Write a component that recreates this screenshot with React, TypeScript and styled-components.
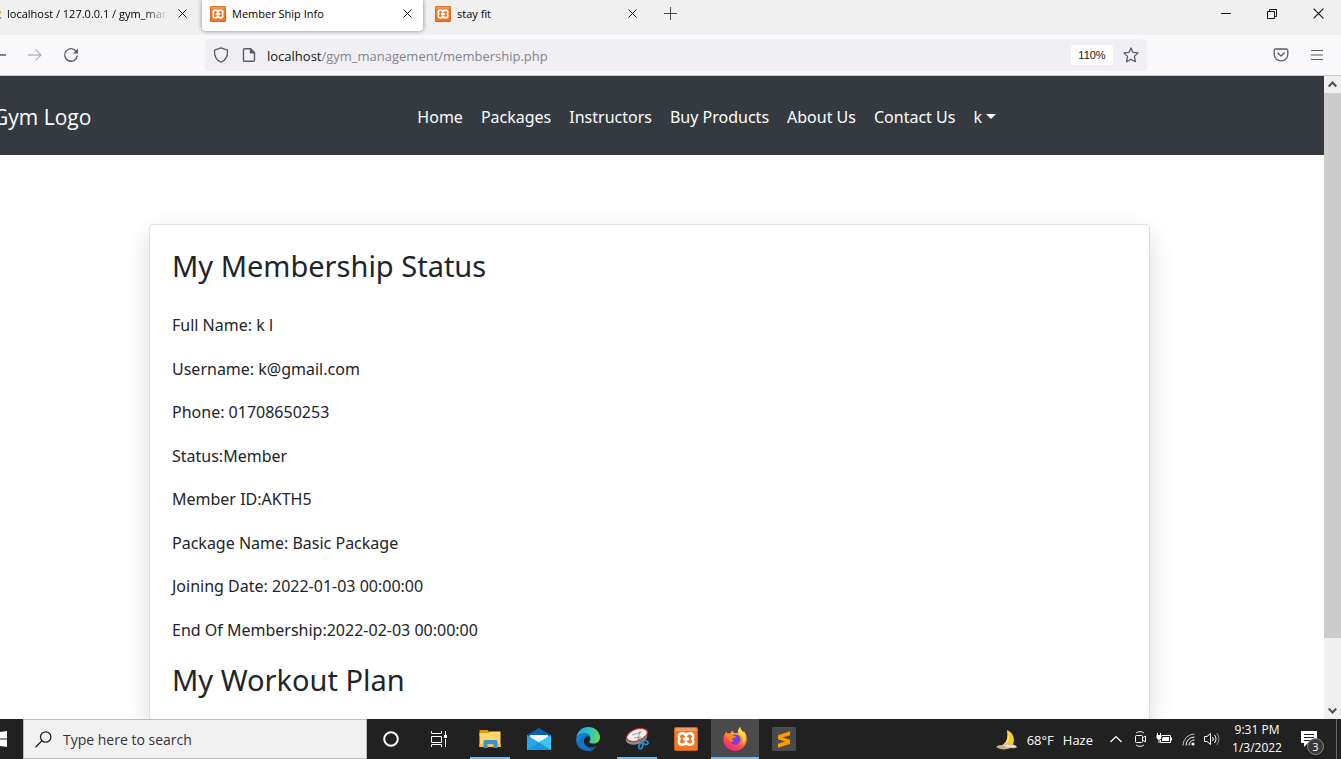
import React from "react";
import styled, { createGlobalStyle, css } from "styled-components";

const GlobalStyle = createGlobalStyle`
  *, *::before, *::after { box-sizing: border-box; }
  body { margin: 0; background: #fff; overflow: hidden; }
  body, button, input { font-family: "Open Sans", "Noto Sans", sans-serif; }
  button, input { border: 0; padding: 0; margin: 0; background: none; color: inherit; }
  button { display: flex; align-items: center; justify-content: center; flex: none; }
  svg { display: block; flex: none; }
`;

/* The desktop starts a little left of the visible edge. */
const Desktop = styled.div`
  display: flex;
  flex-direction: column;
  height: 100vh;
  margin-left: -25px;
`;

/* ---------- browser tabs ---------- */
const TabStrip = styled.header`
  display: flex;
  flex: none;
  height: 35px;
  padding-left: 2px;
  background: #f0f0f0;
  color: #15141a;
`;
const TabList = styled.div`
  display: flex;
  gap: 4px;
`;
const Tab = styled.div<{ $active?: boolean }>`
  display: flex;
  align-items: center;
  width: 221px;
  height: 31px;
  padding: 0 8px 4px;
  gap: 6px;
  border-radius: 0 0 4px 4px;
  ${(p) => p.$active && css`
    background: #fff;
    box-shadow: 0 0 4px rgba(0, 0, 0, 0.45);
  `}
`;
const TabTitle = styled.button<{ $fade?: boolean }>`
  flex: 1;
  min-width: 0;
  justify-content: flex-start;
  white-space: nowrap;
  font-size: 11px;
  line-height: 20px;
  color: #000;
  ${(p) => p.$fade && css`
    mask-image: linear-gradient(to left, transparent, #000 24px);
  `}
`;
const TabClose = styled.button`
  width: 16px;
  height: 20px;
`;
const NewTab = styled.button`
  width: 36px;
  height: 27px;
  margin-left: 4px;
`;
const WindowControls = styled.div`
  display: flex;
  margin-left: auto;
`;
const WindowButton = styled.button`
  width: 46px;
  height: 27px;
`;

/* ---------- browser toolbar ---------- */
const Toolbar = styled.div`
  display: flex;
  flex: none;
  align-items: center;
  height: 41px;
  padding: 0 6px;
  background: #f9f9fb;
  border-bottom: 1px solid #cccccc;
  color: #5b5b66;
`;
const ToolButton = styled.button<{ $dim?: boolean }>`
  width: 36px;
  height: 32px;
  opacity: ${(p) => (p.$dim ? 0.4 : 1)};
`;
const AddressBar = styled.div`
  display: flex;
  flex: 1;
  align-items: center;
  height: 32px;
  margin: 0 116px;
  padding: 0 8px;
  gap: 10px;
  border-radius: 4px;
  background: #f0f0f4;
`;
const AddressIcons = styled.div`
  display: flex;
  gap: 12px;
`;
const Address = styled.label`
  display: flex;
  flex: 1;
  align-items: center;
  padding-top: 2px;
  font-size: 13px;
  line-height: 20px;
  color: #15141a;
`;
const AddressInput = styled.input`
  flex: 1;
  min-width: 0;
  font-size: 13px;
  line-height: 20px;
  color: #84848c;
`;
const ZoomLevel = styled.button`
  width: 42px;
  height: 20px;
  border-radius: 3px;
  background: #fff;
  color: #15141a;
  font-family: "Liberation Sans", sans-serif;
  font-size: 11px;
`;

/* ---------- page ---------- */
const Viewport = styled.div`
  display: flex;
  flex: 1;
  min-height: 0;
  background: #fff;
`;
const Page = styled.div`
  flex: 1;
  min-width: 0;
  overflow: hidden;
  font-family: "Noto Sans", "Open Sans", sans-serif;
`;
const Navbar = styled.nav`
  display: flex;
  align-items: center;
  height: 79px;
  padding: 2px 18px 0;
  background: #343a40;
  color: #fff;
`;
const Brand = styled.a`
  margin-right: 16px;
  font-family: "Open Sans", sans-serif;
  font-size: 21px;
  line-height: 32px;
  color: #fff;
  text-decoration: none;
  white-space: nowrap;
`;
const NavList = styled.ul`
  display: flex;
  flex: 1;
  justify-content: center;
  margin: 0;
  padding: 0;
  list-style: none;
`;
const NavLink = styled.a`
  display: flex;
  align-items: center;
  gap: 4px;
  padding: 0 9px;
  font-size: 16px;
  line-height: 26px;
  color: #fff;
  text-decoration: none;
  white-space: nowrap;
`;
const Caret = styled.span`
  border: 5px solid transparent;
  border-top-color: currentColor;
  border-bottom: 0;
`;
const Card = styled.main`
  max-width: 1001px;
  margin: 69px auto;
  padding: 22px;
  border: 1px solid #dfdfdf;
  border-radius: 4px;
  background: #fff;
  box-shadow: 0 9px 26px rgba(0, 0, 0, 0.14);
  color: #212529;
`;
const Heading = styled.h3`
  margin: 0;
  font-size: 29px;
  line-height: 37px;
  font-weight: 400;
`;
const Details = styled.div`
  display: flex;
  flex-direction: column;
  justify-content: space-between;
  min-height: 331px;
  margin: 28px 0 18px;
`;
const Detail = styled.p`
  margin: 0;
  font-size: 16px;
  line-height: 26px;
`;

const ScrollTrack = styled.div`
  display: flex;
  flex: none;
  flex-direction: column;
  width: 17px;
  background: #f0f0f0;
  color: #505050;
`;
const ScrollArrow = styled.button`
  height: 17px;
`;
const ScrollThumb = styled.div`
  flex: 545;
  background: #cdcdcd;
`;
const ScrollRest = styled.div`
  flex: 64;
`;

/* ---------- taskbar ---------- */
const Taskbar = styled.footer`
  display: flex;
  flex: none;
  height: 40px;
  background: #212121;
  color: #fff;
`;
const TaskButton = styled.button<{ $state?: "open" | "active" }>`
  position: relative;
  width: 48px;
  height: 40px;
  ${(p) => p.$state === "active" && css`background: #4a4a4a;`}
  ${(p) => p.$state && css`
    &::after {
      content: "";
      position: absolute;
      bottom: 0;
      left: ${p.$state === "active" ? 0 : 4}px;
      right: ${p.$state === "active" ? 0 : 4}px;
      height: 2px;
      background: #76b9ed;
    }
  `}
`;
const SearchBox = styled.label`
  display: flex;
  align-items: center;
  width: 344px;
  padding: 0 11px;
  gap: 11px;
  border: 1px solid #bcbcbc;
  background: #f1f1f1;
  color: #202020;
`;
const SearchInput = styled.input`
  flex: 1;
  min-width: 0;
  padding-top: 2px;
  font-size: 14px;
  line-height: 20px;
  &::placeholder { color: #333; opacity: 1; }
`;
const AppList = styled.div`
  display: flex;
  gap: 1px;
  margin-left: 3px;
`;
const Tray = styled.div`
  display: flex;
  align-items: center;
  margin-left: auto;
`;
const Weather = styled.button`
  height: 40px;
  gap: 9px;
  margin-right: 11px;
  padding-top: 2px;
  font-size: 13px;
  line-height: 20px;
`;
const TrayButton = styled.button`
  width: 24px;
  height: 40px;
`;
const Clock = styled.button`
  flex-direction: column;
  width: 66px;
  height: 40px;
  font-size: 12px;
  line-height: 18px;
`;
const Notifications = styled.button`
  position: relative;
  width: 47px;
  height: 40px;
  padding-right: 9px;
  border-right: 1px solid #6b6b6b;
  margin-right: 4px;
`;
const Badge = styled.span`
  position: absolute;
  left: 17px;
  top: 19px;
  width: 17px;
  height: 17px;
  border: 1px solid #8a8a8a;
  border-radius: 50%;
  background: #3a3a3a;
  font-size: 11px;
  line-height: 15px;
  text-align: center;
`;

/* ---------- drawings ---------- */
const line = { fill: "none", stroke: "currentColor" } as const;

const Xampp = ({ size }: { size: number }) => (
  <svg width={size} height={size} viewBox="0 0 24 24">
    <rect width="24" height="24" rx="2" fill="#c9641c" />
    <rect x="1" y="1" width="22" height="22" rx="2" fill="#f37623" />
    <path d="M1 3a2 2 0 0 1 2-2h18a2 2 0 0 1 2 2v1H1z" fill="#fa9a56" />
    <path
      d="M12 8.800C11.300 6.700 10 6.300 8.300 6.300 6 6.300 4.800 7.500 4.800 9.300c0 1.200.3 2 .9 2.700-.6.700-.9 1.500-.9 2.700 0 1.800 1.200 3 3.500 3 1.700 0 3-.4 3.700-2.500.7 2.100 2 2.500 3.700 2.500 2.300 0 3.500-1.200 3.500-3 0-1.200-.3-2-.9-2.700.6-.7.900-1.500.9-2.700 0-1.800-1.200-3-3.500-3-1.700 0-3 .4-3.700 2.500z"
      fill="none" stroke="#fff" strokeWidth="2.500" strokeLinejoin="round"
    />
    <path d="M10.500 12h3" stroke="#fff" strokeWidth="3.600" strokeLinecap="round" />
  </svg>
);

const PmaIcon = () => (
  <svg width="16" height="16" viewBox="0 0 16 16">
    <path d="M3 11C5 5 10 3 16 5v3c-5-1-9 0-13 3z" fill="#f6a94a" />
    <path d="M2 13h14v-2l-10-1z" fill="#8a8db3" />
  </svg>
);

const CloseIcon = ({ size = 9 }: { size?: number }) => (
  <svg width={size} height={size} viewBox="0 0 9 9" {...line}>
    <path d="M.5.5l8 8M8.500.5l-8 8" strokeWidth="1" />
  </svg>
);

const Star = () => (
  <svg width="16" height="16" viewBox="0 0 16 16" {...line} strokeWidth="1.300" strokeLinejoin="round">
    <path d="M8 .9l2 4.500 5.100.5-3.700 3.500 1 5.300L8 12.200l-4.400 2.500 1-5.300L.9 5.900 6 5.400z" />
  </svg>
);

const Explorer = () => (
  <svg width="24" height="24" viewBox="0 0 24 24">
    <path d="M1.500 3h8l2 2v4h-10z" fill="#e09a00" />
    <path d="M1.500 6h9l1.500-1.500h10.500V20h-21z" fill="#ffd566" />
    <path d="M1.500 17h21v3h-21z" fill="#f7c244" />
    <path d="M5.500 21v-6.500a1.500 1.500 0 0 1 1.500-1.500h11a1.500 1.500 0 0 1 1.500 1.500V21h-4v-4h-6v4z" fill="#3a8fd8" />
  </svg>
);
const Mail = () => (
  <svg width="24" height="24" viewBox="0 0 24 24">
    <path d="M0 8L12 1l12 7v2H0z" fill="#0a5fb4" />
    <path d="M3 8h18v6l-9 4-9-4z" fill="#f3f6fa" />
    <path d="M0 8l12 7.500V23H0z" fill="#22a7ea" />
    <path d="M24 8L12 15 0 23h24z" fill="#3cc4f7" />
    <path d="M12 15.300L24 23H0z" fill="#1b95e0" />
  </svg>
);
const Edge = () => (
  <svg width="24" height="24" viewBox="0 0 24 24">
    <defs>
      <linearGradient id="edgeTop" x1="0" y1=".4" x2="1" y2=".5">
        <stop offset="0" stopColor="#2aa5e2" />
        <stop offset=".55" stopColor="#2fc5c5" />
        <stop offset="1" stopColor="#6ad84c" />
      </linearGradient>
      <linearGradient id="edgeLow" x1="0" y1="0" x2="1" y2="1">
        <stop offset="0" stopColor="#1b8fdd" />
        <stop offset="1" stopColor="#0d4a94" />
      </linearGradient>
    </defs>
    <path d="M.3 11C1 4.500 6 0 12.200 0 19 0 24 4.900 24 10.300c0 4-3 6.300-6.400 6.300-3 0-4.300-1.100-4.300-1.900 0-.7 1.100-1.100 1.100-3.200C14.400 8.500 11.800 6.500 8.500 6.500 4.500 6.500 1.500 8.500.3 11z" fill="url(#edgeTop)" />
    <path d="M.2 12.500C.6 8.800 4 6.500 8.200 6.500c3.200 0 5.300 1.500 6 3.300-3.600-1.600-6.400 1-6.400 4.200 0 5.500 7 8.500 13.200 4.600C19 22 15.800 24 12 24 5 24-.4 18.500.2 12.500z" fill="url(#edgeLow)" />
    <path d="M7.800 13.500c-.3 5.500 4.700 9.500 10.500 8.800C14 24.800 8 24.200 5 20.500c-2.500-3-2.500-7.500 0-10 1.500-1.500 4-2.500 6-1.800-2 .8-3.200 2.600-3.200 4.800z" fill="#1473c8" />
  </svg>
);
const Snip = () => (
  <svg width="24" height="24" viewBox="0 0 24 24">
    <ellipse cx="11.500" cy="11" rx="11" ry="6.300" transform="rotate(-15 11.500 11)" fill="#8d8d8d" />
    <ellipse cx="12" cy="8" rx="10.800" ry="5.800" transform="rotate(-20 12 8)" fill="#f2f2f2" stroke="#c8322f" strokeWidth="1.200" />
    <path d="M7 8l10-3M9 11l7-1M15 4l-2 8" stroke="#9a9a9a" strokeWidth="1" fill="none" />
    <path d="M13 12l6 2.500M16.500 11l-.3 5" stroke="#777" strokeWidth="1.500" />
    <g fill="none" stroke="#2d8fd5" strokeWidth="1.600">
      <ellipse cx="20.500" cy="15.500" rx="2.600" ry="1.800" transform="rotate(20 20.500 15.500)" />
      <ellipse cx="15.800" cy="19" rx="1.900" ry="2.900" transform="rotate(20 15.800 19)" />
    </g>
  </svg>
);
const Firefox = () => (
  <svg width="24" height="24" viewBox="0 0 24 24">
    <defs>
      <linearGradient id="foxBody" x1=".8" y1="0" x2=".3" y2="1">
        <stop offset="0" stopColor="#ffe14d" />
        <stop offset=".4" stopColor="#ff9a2e" />
        <stop offset=".7" stopColor="#ff4a4a" />
        <stop offset="1" stopColor="#e8218c" />
      </linearGradient>
    </defs>
    <path d="M3.500 4.500c.2 1 .6 1.500 1 2 .9-.3 1.900-.2 2.700 0C7.800 5 9 4 10.200 3.500c-.2 1 0 2 .6 2.600l4-.1C15 3 15.500 1.500 17 0c.5 2.500 2 3.500 3.500 5.500l.2-1.800C23 6.500 24 9.500 23.700 12.800 23.200 19 18.200 24 12 24 5.500 24 .5 19 .3 12.800.2 9.500 1.500 6.500 3.500 4.500z" fill="url(#foxBody)" />
    <path d="M17 0c.5 2.500 2.500 4 3.800 6 2 3.500 1.300 8-.8 10.500 1-4.500-.5-8-4-10C15 4 15.500 2 17 0z" fill="#ffdc4a" />
    <circle cx="12.300" cy="12.500" r="5.200" fill="#7542e5" />
    <path d="M3 8c2-1.500 5-1 6.500.5 1.500.2 3 .3 3.500 1-.5 1-2 1.500-3.500 1.700-.5 1.500.3 2.500 1.500 3.100-2.500 1.200-5.500-.3-6-3z" fill="#ff8a1f" />
  </svg>
);
const Sublime = () => (
  <svg width="24" height="24" viewBox="0 0 24 24">
    <rect width="24" height="24" rx="1.500" fill="#4b4b4b" />
    <path d="M6 8.200L18 4.300v4L10.800 10.600 18 12.800v4.300L6 20.800v-4l7.200-2.300L6 12.300z" fill="#ff9800" />
  </svg>
);
const Moon = () => (
  <svg width="24" height="22" viewBox="0 0 24 22">
    <path d="M13 1c7 3 8 9 6 15-3 4-11 4-15 1 7 0 11-6 9-16z" fill="#f8ce26" />
    <path d="M13 1c3 5 3 11-2 15l-4 1c6-3 8-9 6-16z" fill="#fde36a" />
    <path d="M2 18c2-2 5-2 7-1 2-3 6-3 8-1 2-1 5 0 6 2-2 2-4 1-6 1-5 2-11 2-15-1z" fill="#c9b48d" />
    <path d="M10 17c2-2 5-2 7-.5 2-.5 4 0 5.500 1.500-4 .8-8 .6-12.500-1z" fill="#ece4d4" />
  </svg>
);

const details = [
  "Full Name: k l",
  "Username: k@gmail.com",
  "Phone: 01708650253",
  "Status:Member",
  "Member ID:AKTH5",
  "Package Name: Basic Package",
  "Joining Date: 2022-01-03 00:00:00",
  "End Of Membership:2022-02-03 00:00:00",
];
const links = ["Home", "Packages", "Instructors", "Buy Products", "About Us", "Contact Us"];

export default function App() {
  return (
    <>
      <GlobalStyle />
      <Desktop>
        <TabStrip>
          <TabList>
            <Tab>
              <PmaIcon />
              <TabTitle $fade>localhost / 127.0.0.1 / gym_man</TabTitle>
              <TabClose aria-label="Close tab"><CloseIcon /></TabClose>
            </Tab>
            <Tab $active>
              <Xampp size={16} />
              <TabTitle>Member Ship Info</TabTitle>
              <TabClose aria-label="Close tab"><CloseIcon /></TabClose>
            </Tab>
            <Tab>
              <Xampp size={16} />
              <TabTitle>stay fit</TabTitle>
              <TabClose aria-label="Close tab"><CloseIcon /></TabClose>
            </Tab>
          </TabList>
          <NewTab aria-label="New tab">
            <svg width="13" height="13" viewBox="0 0 13 13" {...line} opacity=".75"><path d="M6.500 0v13M0 6.500h13" /></svg>
          </NewTab>
          <WindowControls>
            <WindowButton aria-label="Minimize">
              <svg width="10" height="10" viewBox="0 0 10 10" {...line}><path d="M0 4.500h10" /></svg>
            </WindowButton>
            <WindowButton aria-label="Restore">
              <svg width="10" height="10" viewBox="0 0 10 10" {...line}><path d="M.5 2.500h7v7h-7zM2.500 2.500v-2h7v7h-2" /></svg>
            </WindowButton>
            <WindowButton aria-label="Close"><CloseIcon size={11} /></WindowButton>
          </WindowControls>
        </TabStrip>

        <Toolbar>
          <ToolButton aria-label="Back">
            <svg width="14" height="14" viewBox="0 0 14 14" {...line} strokeWidth="1.300"><path d="M14 7H1M6.500 1.500L1 7l5.500 5.500" /></svg>
          </ToolButton>
          <ToolButton $dim aria-label="Forward">
            <svg width="14" height="14" viewBox="0 0 14 14" {...line} strokeWidth="1.300"><path d="M0 7h13M7.500 1.500L13 7l-5.500 5.500" /></svg>
          </ToolButton>
          <ToolButton aria-label="Reload">
            <svg width="16" height="16" viewBox="0 0 16 16" {...line} strokeWidth="1.400">
              <path d="M13.300 4.500A6.300 6.300 0 1 0 14.300 8.500" />
              <path d="M15 1.500V6.500h-5z" fill="currentColor" stroke="none" />
            </svg>
          </ToolButton>
          <AddressBar>
            <AddressIcons>
              <svg width="16" height="16" viewBox="0 0 16 16" {...line} strokeWidth="1.300" strokeLinejoin="round">
                <path d="M8 .8l6.500 2.400c.3 5-1.500 10-6.500 12-5-2-6.800-7-6.500-12z" />
              </svg>
              <svg width="16" height="16" viewBox="0 0 16 16" {...line} strokeWidth="1.400" strokeLinejoin="round">
                <path d="M3.500 1.700h6l4 4v7.600a1 1 0 0 1-1 1h-9a1 1 0 0 1-1-1V2.700a1 1 0 0 1 1-1z" />
                <path d="M9.500 1.700v4h4z" fill="currentColor" />
              </svg>
            </AddressIcons>
            <Address>
              <span>localhost</span>
              <AddressInput aria-label="Address" defaultValue="/gym_management/membership.php" />
            </Address>
            <ZoomLevel>110%</ZoomLevel>
            <Star />
          </AddressBar>
          <ToolButton aria-label="Save to Pocket">
            <svg width="16" height="16" viewBox="0 0 16 16" {...line} strokeWidth="1.300" strokeLinejoin="round">
              <path d="M2.500 2h11a1.300 1.300 0 0 1 1.300 1.300V7.500a6.800 6.300 0 0 1-13.600 0V3.300A1.300 1.300 0 0 1 2.500 2z" />
              <path d="M4.800 6L8 9l3.200-3" strokeLinecap="round" />
            </svg>
          </ToolButton>
          <ToolButton aria-label="Menu">
            <svg width="12" height="12" viewBox="0 0 12 12" {...line} strokeWidth="1.200"><path d="M0 1.500h12M0 6h12M0 10.500h12" /></svg>
          </ToolButton>
        </Toolbar>

        <Viewport>
          <Page>
            <Navbar>
              <Brand href="#">Gym Logo</Brand>
              <NavList>
                {links.map((label) => (
                  <li key={label}><NavLink href="#">{label}</NavLink></li>
                ))}
                <li><NavLink href="#">k<Caret /></NavLink></li>
              </NavList>
            </Navbar>
            <Card>
              <Heading>My Membership Status</Heading>
              <Details>
                {details.map((text) => <Detail key={text}>{text}</Detail>)}
              </Details>
              <Heading>My Workout Plan</Heading>
            </Card>
          </Page>
          <ScrollTrack>
            <ScrollArrow aria-label="Scroll up">
              <svg width="9" height="7" viewBox="0 0 9 7" {...line} strokeWidth="2"><path d="M.7 5.500l3.800-4 3.800 4" /></svg>
            </ScrollArrow>
            <ScrollThumb />
            <ScrollRest />
            <ScrollArrow aria-label="Scroll down">
              <svg width="9" height="7" viewBox="0 0 9 7" {...line} strokeWidth="2"><path d="M.7 1.500l3.800 4 3.800-4" /></svg>
            </ScrollArrow>
          </ScrollTrack>
        </Viewport>

        <Taskbar>
          <TaskButton aria-label="Start">
            <svg width="16" height="16" viewBox="0 0 16 16" fill="#fff"><path d="M0 2.300l6.500-.9v6.100H0zM7.500 1.200L16 0v7.500H7.500zM0 8.500h6.500v6.100L0 13.700zM7.500 8.500H16V16l-8.500-1.200z" /></svg>
          </TaskButton>
          <SearchBox>
            <svg width="17" height="17" viewBox="0 0 17 17" {...line} strokeWidth="1.300"><circle cx="10.700" cy="6" r="5.200" /><path d="M7 9.800L.5 16.300" /></svg>
            <SearchInput aria-label="Search" placeholder="Type here to search" />
          </SearchBox>
          <TaskButton aria-label="Cortana">
            <svg width="16" height="16" viewBox="0 0 16 16" {...line} strokeWidth="2"><circle cx="8" cy="8" r="6.800" /></svg>
          </TaskButton>
          <TaskButton aria-label="Task view">
            <svg width="16" height="16" viewBox="0 0 16 16" {...line}>
              <path d="M.5 0v2.500h10V0M.5 5.500h10v6H.5zM.5 16v-2.500h10V16M14.500 0v4M14.500 8v8" />
              <path d="M13 4h3v3h-3z" fill="currentColor" stroke="none" />
            </svg>
          </TaskButton>
          <AppList>
            <TaskButton $state="open" aria-label="File Explorer"><Explorer /></TaskButton>
            <TaskButton aria-label="Mail"><Mail /></TaskButton>
            <TaskButton aria-label="Edge"><Edge /></TaskButton>
            <TaskButton $state="open" aria-label="Snipping Tool"><Snip /></TaskButton>
            <TaskButton aria-label="XAMPP"><Xampp size={24} /></TaskButton>
            <TaskButton $state="active" aria-label="Firefox"><Firefox /></TaskButton>
            <TaskButton aria-label="Sublime Text"><Sublime /></TaskButton>
          </AppList>
          <Tray>
            <Weather><Moon /><span>68°F</span><span>Haze</span></Weather>
            <TrayButton aria-label="Show hidden icons">
              <svg width="12" height="8" viewBox="0 0 12 8" {...line} strokeWidth="1.200"><path d="M.5 7L6 1.500 11.500 7" /></svg>
            </TrayButton>
            <TrayButton aria-label="Meet now">
              <svg width="12" height="16" viewBox="0 0 12 16" {...line}>
                <rect x="1.500" y="4.500" width="7" height="7" rx="1" /><path d="M8.500 7l3-2v6l-3-2M2 2.200C3.500.2 8.500.2 10 2.200M2 13.800c1.500 2 6.500 2 8 0" />
              </svg>
            </TrayButton>
            <TrayButton aria-label="Battery">
              <svg width="16" height="12" viewBox="0 0 16 12" {...line}>
                <path d="M6 2.500h8.500v7h-10V7M15.500 4.500v3M1.500 0v2M4.500 0v2M3 6v4" /><path d="M.5 2h5v2.500a2 2 0 0 1-2 2h-1a2 2 0 0 1-2-2z" fill="currentColor" stroke="none" />
                <path d="M7 4h6v4H6V6z" fill="currentColor" stroke="none" />
              </svg>
            </TrayButton>
            <TrayButton aria-label="Wi-Fi">
              <svg width="13" height="13" viewBox="0 0 13 13" {...line}>
                <path d="M1 12.500A11.500 11.500 0 0 1 12.500 1" opacity=".7" /><path d="M4 12.500A8.500 8.500 0 0 1 12.500 4M7 12.500A5.500 5.500 0 0 1 12.500 7" />
                <circle cx="11" cy="11" r="1.600" fill="currentColor" stroke="none" />
              </svg>
            </TrayButton>
            <TrayButton aria-label="Volume">
              <svg width="16" height="14" viewBox="0 0 16 14" {...line}>
                <path d="M.5 4.500h2.500L6.500 1.500v11L3 9.500H.5zM8.500 5a3 3 0 0 1 0 4M10.500 3a6 6 0 0 1 0 8" /><path d="M12.800 1.200a9 9 0 0 1 0 11.600" opacity=".5" />
              </svg>
            </TrayButton>
            <Clock><span>9:31 PM</span><span>1/3/2022</span></Clock>
            <Notifications aria-label="Notifications">
              <svg width="16" height="16" viewBox="0 0 16 16">
                <path d="M0 0h16v12H7l-4 4v-4H0z" fill="#fff" /><path d="M3 3.500h10M3 6.500h10M3 9.500h7" stroke="#212121" />
              </svg>
              <Badge>3</Badge>
            </Notifications>
          </Tray>
        </Taskbar>
      </Desktop>
    </>
  );
}
